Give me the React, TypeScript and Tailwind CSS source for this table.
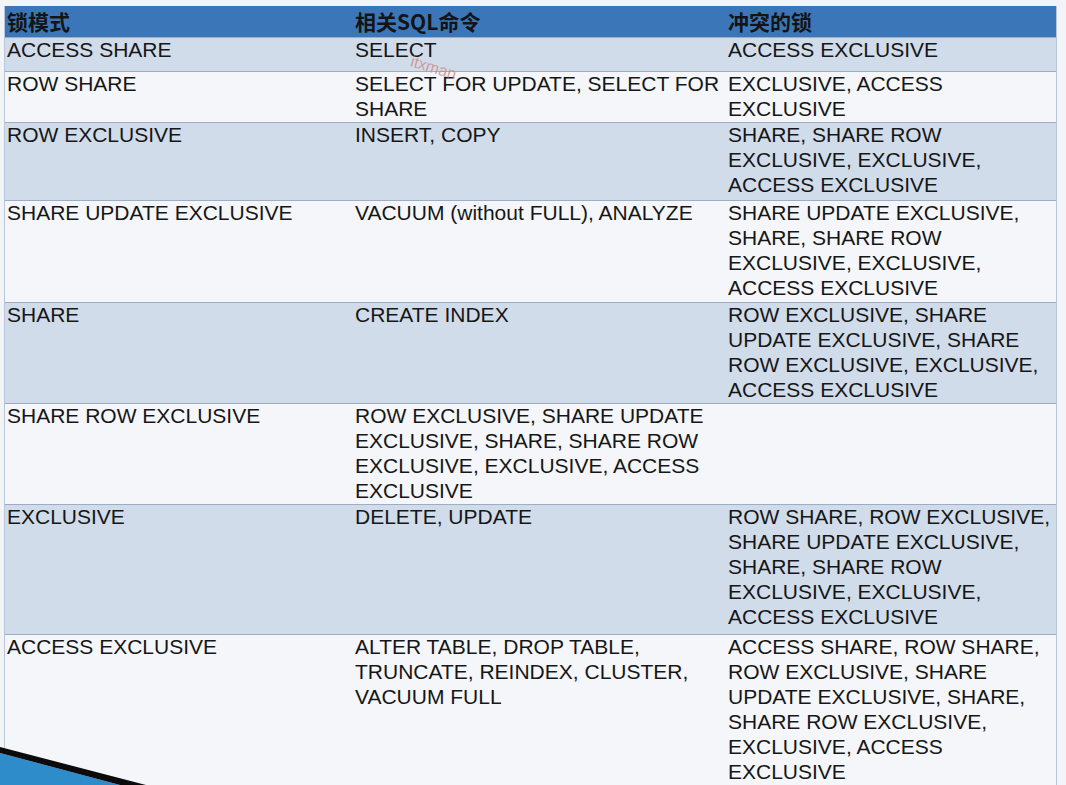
import React from 'react';

interface LockRow {
  mode: string[];
  sql: string[];
  conflicts: string[];
  h: string;
  bg: string;
}

const rows: LockRow[] = [
  { mode: ['ACCESS SHARE'], sql: ['SELECT'], conflicts: ['ACCESS EXCLUSIVE'], h: 'h-[34px]', bg: 'bg-[#d1dcea]' },
  {
    mode: ['ROW SHARE'],
    sql: ['SELECT FOR UPDATE, SELECT FOR', 'SHARE'],
    conflicts: ['EXCLUSIVE, ACCESS', 'EXCLUSIVE'],
    h: 'h-[51px]',
    bg: 'bg-[#f4f6fa]',
  },
  {
    mode: ['ROW EXCLUSIVE'],
    sql: ['INSERT, COPY'],
    conflicts: ['SHARE, SHARE ROW', 'EXCLUSIVE, EXCLUSIVE,', 'ACCESS EXCLUSIVE'],
    h: 'h-[78px]',
    bg: 'bg-[#d1dcea]',
  },
  {
    mode: ['SHARE UPDATE EXCLUSIVE'],
    sql: ['VACUUM (without FULL), ANALYZE'],
    conflicts: ['SHARE UPDATE EXCLUSIVE,', 'SHARE, SHARE ROW', 'EXCLUSIVE, EXCLUSIVE,', 'ACCESS EXCLUSIVE'],
    h: 'h-[102px]',
    bg: 'bg-[#f4f6fa]',
  },
  {
    mode: ['SHARE'],
    sql: ['CREATE INDEX'],
    conflicts: ['ROW EXCLUSIVE, SHARE', 'UPDATE EXCLUSIVE, SHARE', 'ROW EXCLUSIVE, EXCLUSIVE,', 'ACCESS EXCLUSIVE'],
    h: 'h-[101px]',
    bg: 'bg-[#d1dcea]',
  },
  {
    mode: ['SHARE ROW EXCLUSIVE'],
    sql: ['ROW EXCLUSIVE, SHARE UPDATE', 'EXCLUSIVE, SHARE, SHARE ROW', 'EXCLUSIVE, EXCLUSIVE, ACCESS', 'EXCLUSIVE'],
    conflicts: [],
    h: 'h-[101px]',
    bg: 'bg-[#f4f6fa]',
  },
  {
    mode: ['EXCLUSIVE'],
    sql: ['DELETE, UPDATE'],
    conflicts: [
      'ROW SHARE, ROW EXCLUSIVE,',
      'SHARE UPDATE EXCLUSIVE,',
      'SHARE, SHARE ROW',
      'EXCLUSIVE, EXCLUSIVE,',
      'ACCESS EXCLUSIVE',
    ],
    h: 'h-[130px]',
    bg: 'bg-[#d1dcea]',
  },
  {
    mode: ['ACCESS EXCLUSIVE'],
    sql: ['ALTER TABLE, DROP TABLE,', 'TRUNCATE, REINDEX, CLUSTER,', 'VACUUM FULL'],
    conflicts: [
      'ACCESS SHARE, ROW SHARE,',
      'ROW EXCLUSIVE, SHARE',
      'UPDATE EXCLUSIVE, SHARE,',
      'SHARE ROW EXCLUSIVE,',
      'EXCLUSIVE, ACCESS',
      'EXCLUSIVE',
    ],
    h: 'h-[152px]',
    bg: 'bg-[#f4f6fa]',
  },
];

const Cell = ({ lines }: { lines: string[] }) => (
  <div className="pl-[2px] -mt-[1px]">
    {lines.map((l, i) => (
      <div key={i} className="whitespace-nowrap leading-[25px]">
        {l}
      </div>
    ))}
  </div>
);

export default function App() {
  return (
    <div
      className="relative h-[785px] w-[1066px] overflow-hidden bg-[#f3f4f7] pt-[6px] pl-[4px] text-[21px] text-[#161616]"
      style={{ fontFamily: '"Liberation Sans", Arial, "Noto Sans CJK SC", sans-serif' }}
    >
      <div className="w-[1053px] border-l border-r border-[#b9c6d8]">
        <div className="grid h-[31px] grid-cols-[348px_373px_1fr] items-center bg-[#3b77b8] font-bold text-[#141414]">
          <div className="pl-[2px]" style={{ fontFamily: '"Noto Sans CJK SC", sans-serif' }}>锁模式</div>
          <div className="pl-[2px]" style={{ fontFamily: '"Noto Sans CJK SC", sans-serif' }}>相关SQL命令</div>
          <div className="pl-[2px]" style={{ fontFamily: '"Noto Sans CJK SC", sans-serif' }}>冲突的锁</div>
        </div>
        {rows.map((r, i) => (
          <div key={i} className={`grid grid-cols-[348px_373px_1fr] border-t border-[#9dadc3] ${r.h} ${r.bg}`}>
            <Cell lines={r.mode} />
            <Cell lines={r.sql} />
            <Cell lines={r.conflicts} />
          </div>
        ))}
      </div>

      <div className="absolute left-[410px] top-[56px] rotate-[17deg] text-[16px] text-[#d08a8a] opacity-80">itxman</div>

      <svg className="absolute left-0 top-[745px]" width="160" height="40" viewBox="0 0 160 40">
        <polygon points="0,8 120,40 0,40" fill="#2f8ccb" />
        <polygon points="0,2 146,40 120,40 0,8" fill="#0b0b0b" />
      </svg>
    </div>
  );
}
